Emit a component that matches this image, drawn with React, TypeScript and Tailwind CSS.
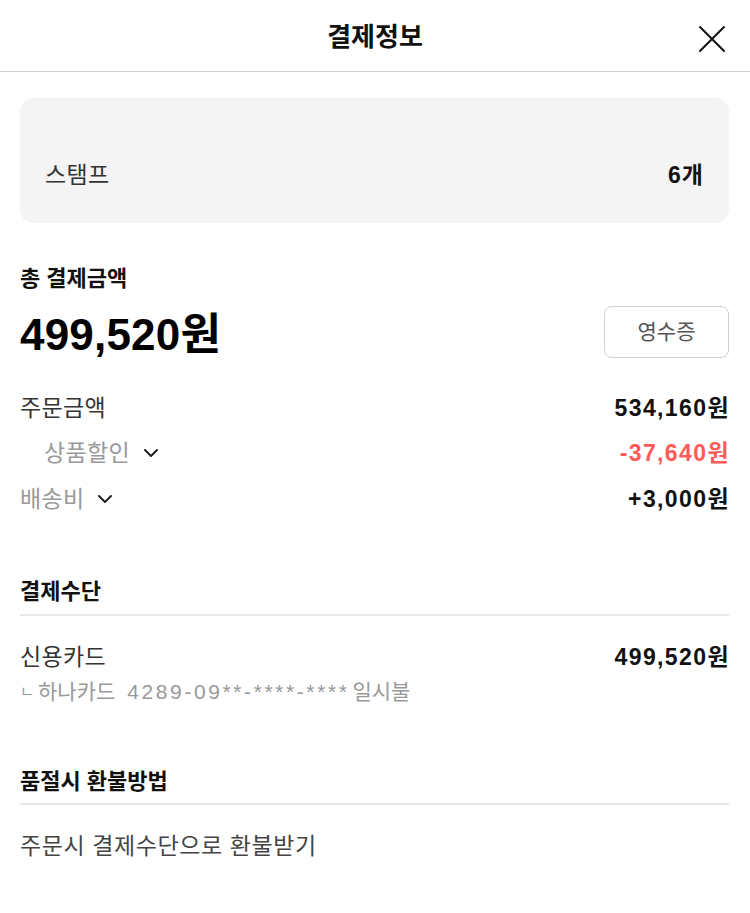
import React from "react";

const font = { fontFamily: '"Liberation Sans", "Noto Sans CJK KR", sans-serif' };

function Chevron() {
  return (
    <svg width="16" height="16" viewBox="0 0 16 16" fill="none" className="ml-[13px]">
      <path d="M2 5 L8 11 L14 5" stroke="#222" strokeWidth="2" strokeLinecap="round" strokeLinejoin="round" />
    </svg>
  );
}

export default function App() {
  return (
    <div className="w-[750px] h-[913px] bg-white text-[#222]" style={font}>
      <header className="relative h-[72px] flex items-center justify-center border-b border-[#cfd1d4]">
        <h1 className="text-[26px] font-bold text-[#111] leading-[32px] mt-[3px]">결제정보</h1>
        <button className="absolute right-[24px] top-[24px] w-[29px] h-[29px] flex items-center justify-center">
          <svg width="28" height="28" viewBox="0 0 28 28" fill="none">
            <path d="M2 2 L26 26 M26 2 L2 26" stroke="#111" strokeWidth="2" strokeLinecap="round" />
          </svg>
        </button>
      </header>

      <div className="pl-[20px] pr-[21px]">
        <div className="mt-[26px] h-[125px] rounded-[14px] bg-[#f4f4f4] pl-[25px] pr-[25px] pt-[62px] flex justify-between items-start">
          <span className="text-[23px] leading-[30px] text-[#333] tracking-[0.3px]">스탬프</span>
          <span className="text-[23px] leading-[30px] font-bold text-[#111] tracking-[1px]">6개</span>
        </div>

        <div className="mt-[41px] text-[22px] font-bold text-[#111] leading-[30px]">총 결제금액</div>
        <div className="mt-[12px] flex items-start justify-between">
          <div className="mt-[3px] text-[44px] font-bold text-[#000] leading-[52px] tracking-[0.2px]">499,520원</div>
          <button className="w-[125px] h-[52px] rounded-[8px] border border-[#cfcfcf] text-[21px] text-[#555]">영수증</button>
        </div>

        <div className="mt-[32px] flex justify-between items-center h-[30px]">
          <span className="text-[23px] text-[#333] tracking-[0.3px]">주문금액</span>
          <span className="text-[23px] font-bold text-[#111] tracking-[1.4px] mr-[-1px]">534,160원</span>
        </div>
        <div className="mt-[15px] flex justify-between items-center h-[30px]">
          <span className="flex items-center pl-[24px] text-[23px] text-[#999] tracking-[0.3px]">상품할인<Chevron /></span>
          <span className="text-[23px] font-bold text-[#ff5a5a] tracking-[1.4px] mr-[-1px]">-37,640원</span>
        </div>
        <div className="mt-[16px] flex justify-between items-center h-[30px]">
          <span className="flex items-center text-[23px] text-[#999] tracking-[0.3px]">배송비<Chevron /></span>
          <span className="text-[23px] font-bold text-[#111] tracking-[1.4px] mr-[-1px]">+3,000원</span>
        </div>

        <div className="mt-[63px] pb-[7px] border-b-2 border-[#e8e8e8] text-[22px] font-bold text-[#111] leading-[30px]">결제수단</div>
        <div className="mt-[26px] flex justify-between items-center h-[30px]">
          <span className="text-[23px] text-[#333] tracking-[0.3px]">신용카드</span>
          <span className="text-[23px] font-bold text-[#111] tracking-[1.4px] mr-[-1px]">499,520원</span>
        </div>
        <div className="mt-[7px] flex items-center h-[26px] text-[21px] text-[#999] leading-[26px]">
          <span className="w-[18px] text-[15px] shrink-0">ㄴ</span>
          <span>하나카드</span>
          <span className="ml-[12px] tracking-[2.6px]">4289-09**-****-****</span>
          <span className="ml-[3px]">일시불</span>
        </div>

        <div className="mt-[62px] pb-[6px] border-b-2 border-[#e8e8e8] text-[22px] font-bold text-[#111] leading-[30px]">품절시 환불방법</div>
        <div className="mt-[26px] text-[23px] text-[#444] tracking-[0.6px] leading-[30px]">주문시 결제수단으로 환불받기</div>
      </div>
    </div>
  );
}
